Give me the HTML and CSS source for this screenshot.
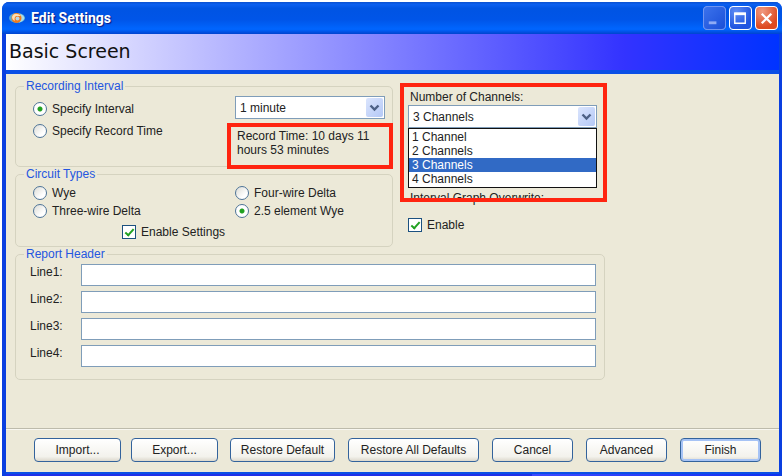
FILE: index.html
```html
<!DOCTYPE html>
<html lang="en">
<head>
    <meta charset="UTF-8">
    <title>Edit Settings</title>
    <link rel="stylesheet" href="styles.css">
</head>
<body>

<div class="window">
    <header class="titlebar">
        <svg class="app-icon" viewBox="0 0 16 12" width="16" height="12" aria-hidden="true">
            <ellipse cx="8" cy="6" rx="8" ry="5" fill="#57a9d6"/>
            <path d="M10 2C13 2 15 4 15.500 6C15 8 13 10 10 10.500Z" fill="#a8dcea"/>
            <circle cx="7.500" cy="6" r="5" fill="#f07a1c"/>
            <path d="M3 5C4 1 9 1 12 4L8 4C6 4 5 6 6 9C4 8 3 7 3 5Z" fill="#ffe0b0"/>
            <circle cx="8.500" cy="6.500" r="2" fill="#b9d8e6"/>
        </svg>
        <h1>Edit Settings</h1>
        <div class="controls">
            <button class="control minimize" aria-label="Minimize">
                <svg viewBox="0 0 22 22"><path d="M5 14h8v3H5z" fill="#8fabf5"/></svg>
            </button>
            <button class="control" aria-label="Maximize">
                <svg viewBox="0 0 22 22"><path d="M5 6h11v10H5z" fill="none" stroke="#fff" stroke-width="1.4"/><path d="M4.300 4.500h12.400v3H4.300z" fill="#fff"/></svg>
            </button>
            <button class="control close" aria-label="Close">
                <svg viewBox="0 0 22 22"><path d="M6 6l10 10M16 6L6 16" stroke="#fff" stroke-width="2.400"/></svg>
            </button>
        </div>
    </header>

    <h2 class="banner">Basic Screen</h2>

    <form class="panel">
        <div class="settings">
            <div class="groups">
                <fieldset class="interval">
                    <legend>Recording Interval</legend>
                    <div class="modes">
                        <label><input type="radio" name="mode" checked>Specify Interval</label>
                        <label><input type="radio" name="mode">Specify Record Time</label>
                    </div>
                    <div class="duration">
                        <div class="combo">
                            <select aria-label="Interval"><option>1 minute</option></select>
                            <svg viewBox="0 0 17 19"><path d="M4.500 7.500l4 4 4-4" fill="none" stroke="#4d6185" stroke-width="2.400"/></svg>
                        </div>
                        <p class="record-time marked">Record Time: 10 days 11 hours 53 minutes</p>
                    </div>
                </fieldset>

                <fieldset class="circuit">
                    <legend>Circuit Types</legend>
                    <div class="types">
                        <label><input type="radio" name="circuit">Wye</label>
                        <label><input type="radio" name="circuit">Four-wire Delta</label>
                        <label><input type="radio" name="circuit">Three-wire Delta</label>
                        <label><input type="radio" name="circuit" checked>2.5 element Wye</label>
                    </div>
                    <label class="enable-settings"><input type="checkbox" checked>Enable Settings</label>
                </fieldset>
            </div>

            <div class="side">
                <div class="channels marked">
                    <label for="channels">Number of Channels:</label>
                    <div class="combo">
                        <select id="channels"><option>3 Channels</option></select>
                        <svg viewBox="0 0 17 19"><path d="M4.500 7.500l4 4 4-4" fill="none" stroke="#4d6185" stroke-width="2.400"/></svg>
                        <ul class="options" role="listbox" aria-label="Number of Channels">
                            <li role="option">1 Channel</li>
                            <li role="option">2 Channels</li>
                            <li role="option" aria-selected="true">3 Channels</li>
                            <li role="option">4 Channels</li>
                        </ul>
                    </div>
                </div>
                <div class="overwrite">
                    <p>Interval Graph Overwrite:</p>
                    <label><input type="checkbox" checked>Enable</label>
                </div>
            </div>
        </div>

        <fieldset class="report">
            <legend>Report Header</legend>
            <div class="line"><label for="line1">Line1:</label><input type="text" id="line1"></div>
            <div class="line"><label for="line2">Line2:</label><input type="text" id="line2"></div>
            <div class="line"><label for="line3">Line3:</label><input type="text" id="line3"></div>
            <div class="line"><label for="line4">Line4:</label><input type="text" id="line4"></div>
        </fieldset>
    </form>

    <footer class="actions">
        <div class="files">
            <button class="btn">Import...</button>
            <button class="btn">Export...</button>
        </div>
        <div class="main-actions">
            <button class="btn restore">Restore Default</button>
            <button class="btn restore-all">Restore All Defaults</button>
            <button class="btn">Cancel</button>
            <button class="btn">Advanced</button>
            <button class="btn default">Finish</button>
        </div>
    </footer>
</div>

</body>
</html>
```

FILE: styles.css
```css
*, *::before, *::after {
    box-sizing: border-box;
    margin: 0;
    padding: 0;
}

body {
    background-color: #fff;
    color: #222;
    font: 12px/14px "Liberation Sans", Arial, sans-serif;
}

button, select, input {
    font: inherit;
    color: inherit;
}

.window {
    display: flex;
    flex-direction: column;
    min-height: calc(100vh - 2px);
    margin: 2px 2px 0;
    border: solid #0a3fe0;
    border-width: 0 3px 0 4px;
    border-radius: 7px 7px 0 0;
    background-color: #0a4fe6;

    /* bottom edge */
    &::after {
        content: '';
        height: 2px;
        margin-top: 2px;
        background-image: linear-gradient(90deg, #2030e8 68%, #3c48ff 68%, #1030f0);
    }
}

/* title bar */
.titlebar {
    display: flex;
    align-items: center;
    height: 32px;
    margin: 0 -3px 0 -4px;
    padding: 0 4px 0 7px;
    border-radius: 7px 7px 0 0;
    background-image: linear-gradient(#0a50d0, #0a5ff0 8%, #0054e3 20%, #0055e8 55%, #0066ff 85%, #0043cf);

    h1 {
        flex: 1;
        margin-left: 6px;
        color: #fff;
        font: bold 14px/20px Roboto, sans-serif;
        text-shadow: 1px 1px 1px #0a1883;
    }
}

.controls {
    display: flex;
    gap: 3px;
}

.control {
    width: 23px;
    height: 24px;
    border: 1px solid #fff;
    border-radius: 4px;
    background-image: radial-gradient(circle at 30% 20%, #5f8df5, #2055e0 70%);

    svg { display: block; }

    &.minimize { border-color: #6f94f0; background-image: linear-gradient(135deg, #3b72ec, #1a4fd8); }
    &.close { background-image: radial-gradient(circle at 30% 20%, #f09a80, #dd4a20 70%); }
}

.banner {
    height: 36px;
    padding-left: 3px;
    background-image: linear-gradient(90deg, #fff, #aaf 33%, #33f 80%, #0033ff);
    color: #111;
    font: 19px/34px "DejaVu Sans", Verdana, sans-serif;
}

/* form */
.panel {
    flex: 1;
    margin-top: 4px;
    padding: 5px 9px 0;
    background-color: #ece9d8;
}

.settings {
    display: grid;
    grid-template-columns: 378px 189px;
    gap: 15px;
}

fieldset {
    border: 1px solid #d5d3c0;
    border-radius: 5px;
    padding: 3px 8px 0 17px;
}

legend {
    margin-left: -9px;
    padding: 0 2px;
    color: #2456e0;
}

label:has(input) {
    display: flex;
    align-items: center;
    gap: 5px;
    height: 18px;
}

.interval {
    display: flex;
    justify-content: space-between;
    height: 88px;
    padding-right: 7px;

    .modes label { height: 22px; margin-top: 2px; }
    .modes label + label { margin-top: 0; }
    .duration { width: 150px; }
}

.circuit {
    height: 80px;
    padding-right: 0;

    .types {
        display: grid;
        grid-template-columns: 202px 1fr;
    }
}

.enable-settings {
    margin: 3px 0 0 89px;
}

input[type="radio"], input[type="checkbox"] {
    appearance: none;
    width: 14px;
    height: 14px;
    border: 1px solid #4d7396;
    background-color: #fff;
}

input[type="radio"] {
    border-radius: 50%;
    background-image: linear-gradient(135deg, #dcdcd6, #fff 70%);

    &:checked { background-image: radial-gradient(circle, #21a121 2px, transparent 3px); }
}

input[type="checkbox"] {
    display: grid;
    place-items: center;
    border-color: #1c5180;

    /* tick */
    &:checked::before {
        content: '';
        width: 5px;
        height: 9px;
        border: solid #21a121;
        border-width: 0 2px 2px 0;
        transform: translateY(-1px) rotate(42deg);
    }
}

.combo {
    position: relative;

    select {
        appearance: none;
        display: block;
        width: 100%;
        height: 23px;
        padding: 0 20px 0 4px;
        border: 1px solid #7f9db9;
        background-color: #fff;
    }

    > svg {
        position: absolute;
        right: 2px;
        top: 2px;
        width: 17px;
        height: 19px;
        border-radius: 2px;
        background-image: linear-gradient(135deg, #dbe5fd, #b4c8f6);
        pointer-events: none;
    }
}

.options {
    position: absolute;
    top: 100%;
    left: 0;
    right: 0;
    padding: 1px 0;
    border: 1px solid #111;
    background-color: #fff;
    list-style: none;

    li { padding-left: 3px; }
    li[aria-selected="true"] { background-color: #316ac5; color: #fff; }
}

/* red frames drawn over the form */
.marked {
    position: relative;

    &::after {
        content: '';
        position: absolute;
        inset: var(--frame);
        border: 4px solid #ff2410;
        pointer-events: none;
    }
}

.record-time {
    --frame: -6px -8px -12px;
    margin-top: 10px;
    padding-left: 2px;
}

.channels {
    --frame: 4px -10px -74px -8px;
    padding-top: 11px;

    > label { display: block; margin: 0 0 1px 2px; }
}

.overwrite {
    margin-top: 63px;

    p { padding-left: 2px; }
    label { margin-top: 11px; }
}

.report {
    max-width: 590px;
    padding: 3px 8px 12px 14px;

    legend { margin-left: -6px; }
}

.line {
    display: flex;

    & + & { margin-top: 5px; }
    label { width: 51px; padding-top: 1px; }

    input {
        flex: 1;
        height: 22px;
        padding: 0 4px;
        border: 1px solid #7f9db9;
        background-color: #fff;
    }
}

/* bottom buttons */
.actions {
    display: flex;
    justify-content: space-between;
    padding: 9px 18px 10px 28px;
    border-top: 1px solid #bdbbab;
    background-color: #ece9d8;
    box-shadow: inset 0 1px #f8f7f0;
}

.files { display: flex; gap: 10px; }
.main-actions { display: flex; gap: 13px; }

.btn {
    width: 81px;
    height: 24px;
    border: 1px solid #33639c;
    border-radius: 4px;
    background-image: linear-gradient(#fff, #f3f2ec 80%, #dcd8cc);

    .files & { width: 87px; }
    &.restore { width: 105px; }
    &.restore-all { width: 131px; }
    &.default { box-shadow: inset 0 0 0 2px #a6c3f5; }
}
```
